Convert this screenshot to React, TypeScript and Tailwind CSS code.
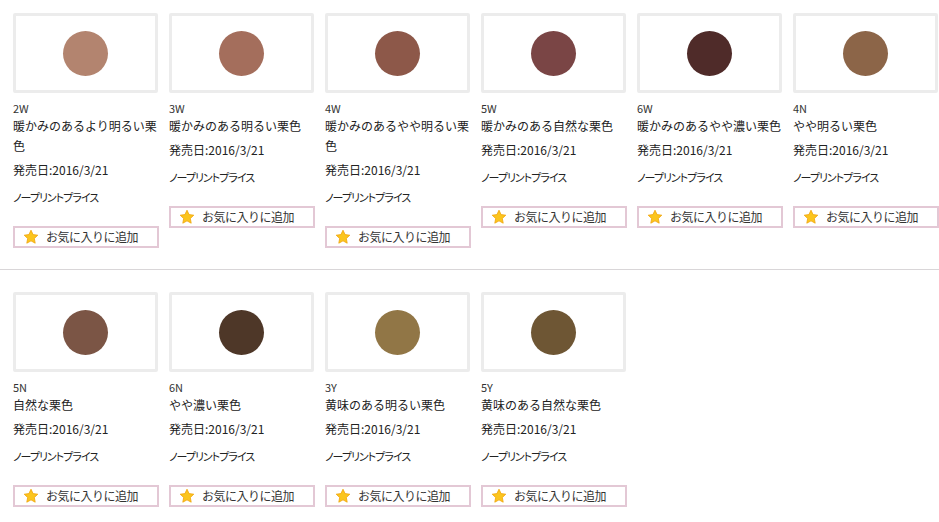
type Shade = {
  code: string;
  name: string;
  color: string;
};

const rowOne: Shade[] = [
  { code: "2W", name: "暖かみのあるより明るい栗色", color: "#b3846f" },
  { code: "3W", name: "暖かみのある明るい栗色", color: "#a46e5c" },
  { code: "4W", name: "暖かみのあるやや明るい栗色", color: "#8d5849" },
  { code: "5W", name: "暖かみのある自然な栗色", color: "#7a4545" },
  { code: "6W", name: "暖かみのあるやや濃い栗色", color: "#4f2b29" },
  { code: "4N", name: "やや明るい栗色", color: "#8c6548" },
];

const rowTwo: Shade[] = [
  { code: "5N", name: "自然な栗色", color: "#7b5545" },
  { code: "6N", name: "やや濃い栗色", color: "#4e3728" },
  { code: "3Y", name: "黄味のある明るい栗色", color: "#917646" },
  { code: "5Y", name: "黄味のある自然な栗色", color: "#6e5634" },
];

const Star = () => (
  <svg width="16" height="16" viewBox="0 0 24 24" className="shrink-0">
    <path
      d="M12 1.8l3.1 6.6 7.1.9-5.2 4.9 1.3 7.1L12 17.8l-6.3 3.5 1.3-7.1-5.2-4.9 7.1-.9z"
      fill="#fbc51e"
      stroke="#f0a30a"
      strokeWidth="1.2"
      strokeLinejoin="round"
    />
  </svg>
);

const ShadeCard = ({ shade }: { shade: Shade }) => {
  return (
    <div className="flex flex-col w-[145px]">
      <div className="h-[80px] border-[3px] border-[#ececec] rounded-[2px] flex items-center justify-center bg-white">
        <div
          className="w-[45px] h-[45px] rounded-full"
          style={{ backgroundColor: shade.color }}
        />
      </div>
      <div className="mt-[7px] text-[11px] leading-[16px] text-[#333]">{shade.code}</div>
      <div className="text-[12px] leading-[20px] text-[#222]">{shade.name}</div>
      <div className="mt-[6px] text-[12px] leading-[16px] text-[#222]">発売日:2016/3/21</div>
      <div className="mt-[11px] text-[11px] leading-[16px] text-[#222] tracking-[-1px] [font-feature-settings:'palt']">
        ノープリントプライス
      </div>
      <button className="mt-[21px] h-[22px] w-[146px] border-2 border-[#e3c8d5] flex items-center gap-[7px] pl-[8px] bg-white text-[12px] text-[#333]">
        <Star />
        <span className="tracking-[-0.5px]">お気に入りに追加</span>
      </button>
    </div>
  );
};

export default function App() {
  return (
    <div
      className="w-[939px] h-[522px] bg-white overflow-hidden"
      style={{ fontFamily: '"Noto Sans CJK JP", "Liberation Sans", sans-serif' }}
    >
      <div className="px-[13px] pt-[13px] grid grid-cols-[repeat(6,145px)] gap-x-[11px] items-start">
        {rowOne.map((s) => (
          <ShadeCard key={s.code} shade={s} />
        ))}
      </div>
      <div className="mt-[21px] h-px bg-[#d9d6d8]" />
      <div className="px-[13px] pt-[22px] grid grid-cols-[repeat(6,145px)] gap-x-[11px] items-start">
        {rowTwo.map((s) => (
          <ShadeCard key={s.code} shade={s} />
        ))}
      </div>
    </div>
  );
}
